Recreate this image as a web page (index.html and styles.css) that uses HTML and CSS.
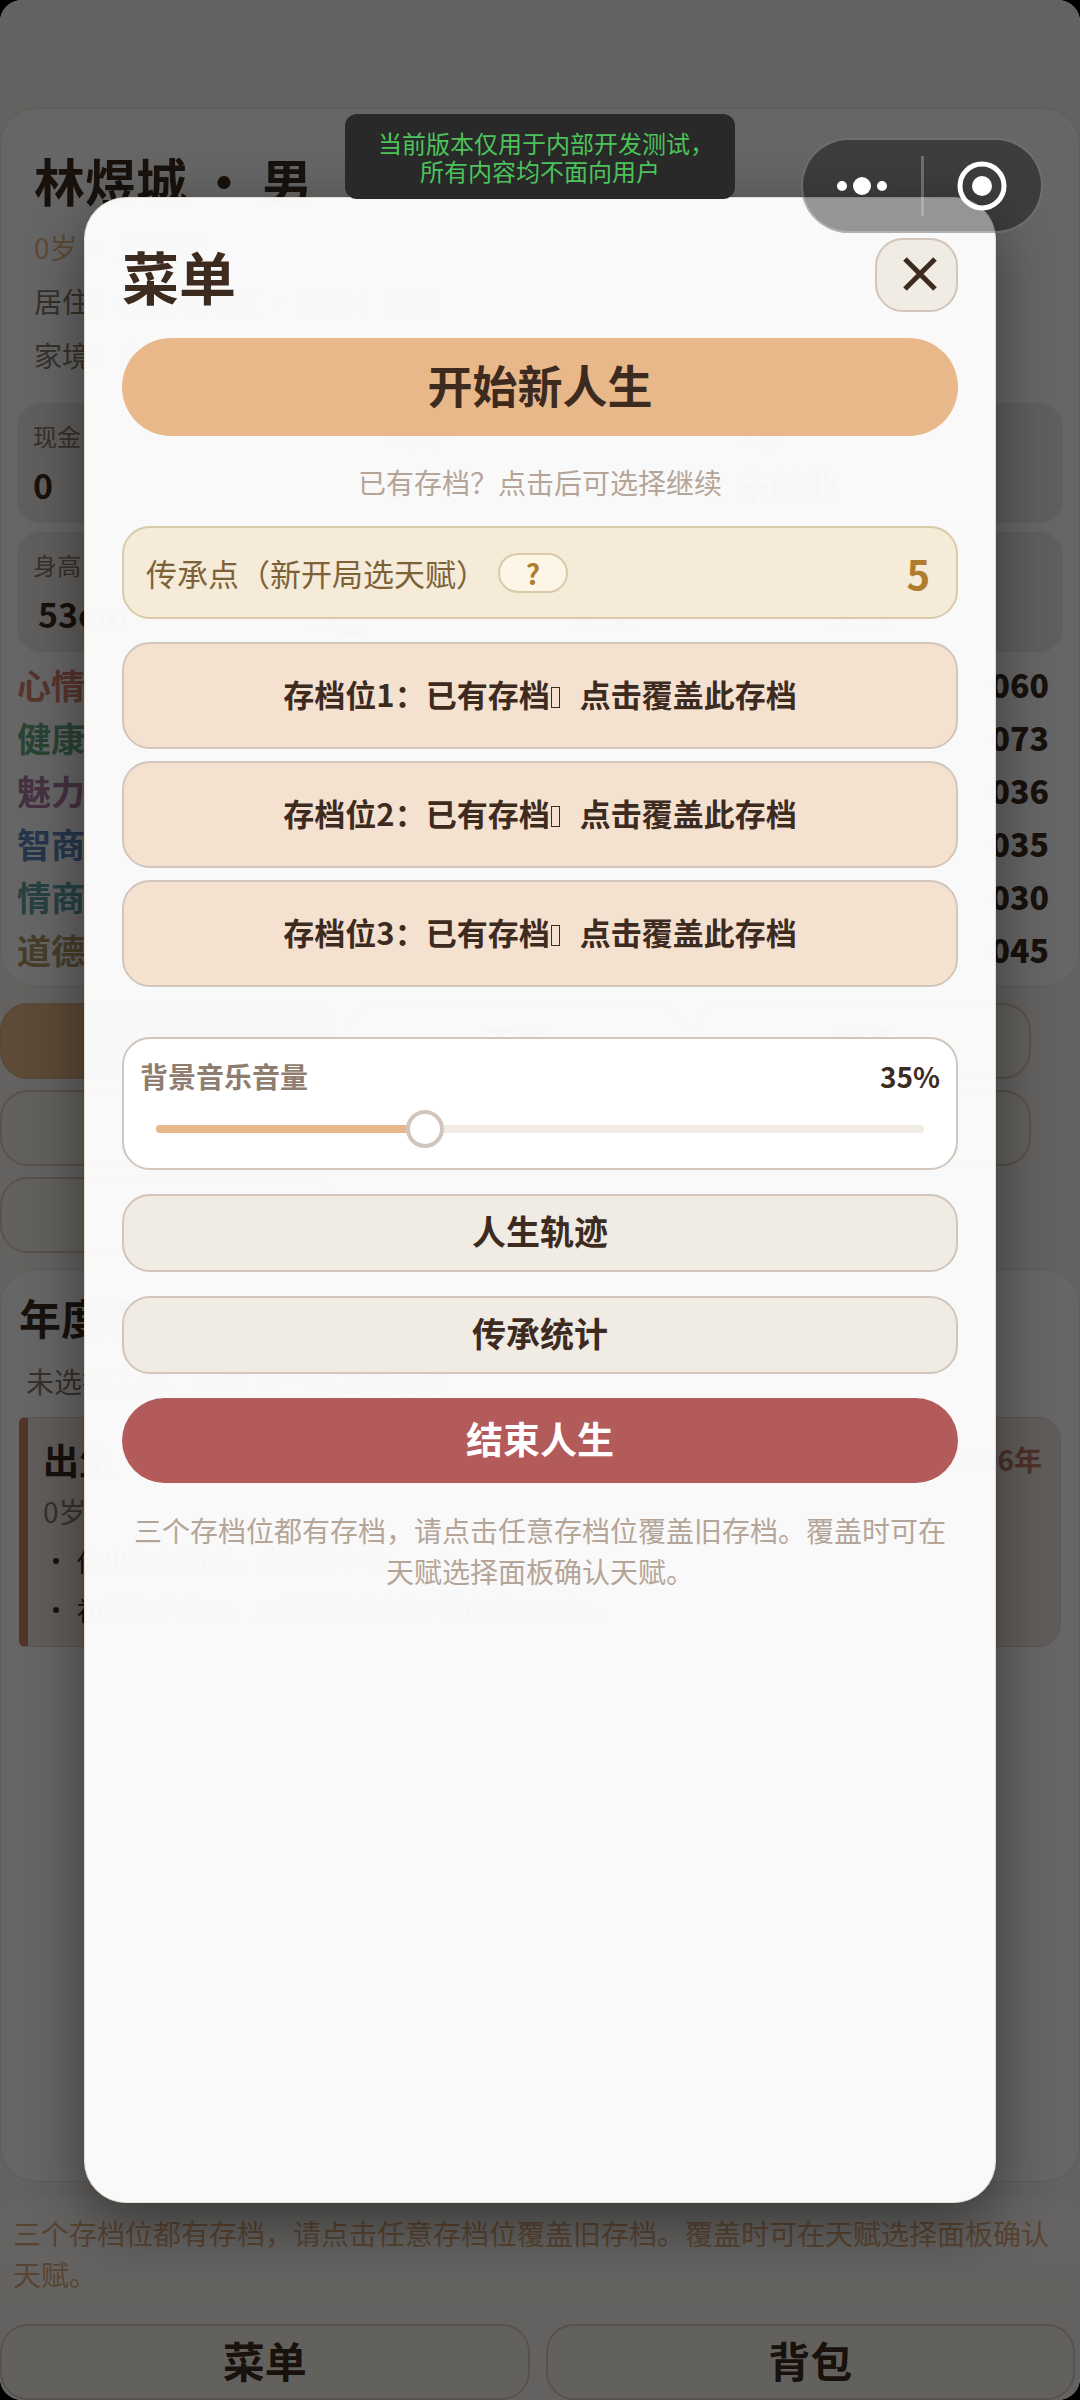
FILE: index.html
```html
<!DOCTYPE html>
<html lang="zh-CN">
<head>
  <meta charset="UTF-8" />
  <meta name="viewport" content="width=device-width, initial-scale=1.0"/>
  <title>菜单</title>
  <link rel="stylesheet" href="styles.css">
</head>
<body>
  <div class="screen">
    <main class="game">
      <section class="card profile">
        <div class="intro">
          <h1>林煜城 ・ 男</h1>
          <p class="age">0岁 · 2006年</p>
          <p>居住：和父母同住 · 生活：普通</p>
          <p>家境：中等</p>
        </div>

        <div class="tiles tiles-3">
          <div class="tile"><span>现金</span><strong>0</strong></div>
          <div class="tile"><span>总资产</span><strong>0</strong></div>
          <div class="tile"><span>工作</span><strong>未就业</strong></div>
        </div>
        <div class="tiles tiles-4">
          <div class="tile"><span>身高</span><strong>53cm</strong></div>
          <div class="tile"><span>体重</span><strong>7kg</strong></div>
          <div class="tile"><span>状态</span><strong>健康</strong></div>
          <div class="tile"><span>婚姻</span><strong>单身</strong></div>
        </div>

        <ul class="attrs">
          <li><span class="mood">心情</span><b>060</b></li>
          <li><span class="health">健康</span><b>073</b></li>
          <li><span class="charm">魅力</span><b>036</b></li>
          <li><span class="iq">智商</span><b>035</b></li>
          <li><span class="eq">情商</span><b>030</b></li>
          <li><span class="moral">道德</span><b>045</b></li>
        </ul>
      </section>

      <div class="actions">
        <button type="button" class="next">下一年</button>
        <button type="button">工作</button>
        <button type="button">财产</button>
        <button type="button">学习</button>
        <button type="button">社交</button>
        <button type="button">商店</button>
        <button type="button">活动</button>
      </div>

      <section class="card yearly">
        <h2>年度事件</h2>
        <p class="desc">未选择工作，可在下一年之前安排</p>
        <article class="event">
          <header><h3>出生</h3><span>2006年</span></header>
          <p>0岁</p>
          <ul>
            <li>你出生在河南，家境是中等。</li>
            <li>初始资产为 0，18岁前的生活开销由父母承担。</li>
          </ul>
        </article>
      </section>

      <p class="notice">三个存档位都有存档，请点击任意存档位覆盖旧存档。覆盖时可在天赋选择面板确认天赋。</p>

      <nav class="tabs">
        <button type="button">菜单</button>
        <button type="button">背包</button>
      </nav>
    </main>

    <div class="overlay">
      <div class="modal" role="dialog" aria-labelledby="menuTitle">
        <header class="modal-head">
          <h2 id="menuTitle">菜单</h2>
          <button type="button" class="close-btn" aria-label="关闭">
            <svg width="34" height="34" viewBox="0 0 34 34"><path d="M2 2L32 32M32 2L2 32" stroke="#3d2b1f" stroke-width="5" fill="none"/></svg>
          </button>
        </header>

        <button type="button" class="start-btn">开始新人生</button>
        <p class="hint start-hint">已有存档？点击后可选择继续</p>

        <div class="legacy">
          <span class="legacy-label">传承点（新开局选天赋）</span>
          <button type="button" class="help-btn">?</button>
          <strong>5</strong>
        </div>

        <div class="slots">
          <button type="button">存档位1：已有存档<i class="mark"></i>点击覆盖此存档</button>
          <button type="button">存档位2：已有存档<i class="mark"></i>点击覆盖此存档</button>
          <button type="button">存档位3：已有存档<i class="mark"></i>点击覆盖此存档</button>
        </div>

        <div class="volume">
          <div class="volume-head">
            <label for="volume">背景音乐音量</label>
            <output for="volume" id="volumeText">35%</output>
          </div>
          <div class="slider" id="slider">
            <input type="range" id="volume" min="0" max="100" value="35" />
          </div>
        </div>

        <button type="button" class="menu-btn">人生轨迹</button>
        <button type="button" class="menu-btn">传承统计</button>
        <button type="button" class="end-btn">结束人生</button>
        <p class="hint">三个存档位都有存档，请点击任意存档位覆盖旧存档。覆盖时可在天赋选择面板确认天赋。</p>
      </div>
    </div>

    <div class="toast">当前版本仅用于内部开发测试，<br>所有内容均不面向用户</div>

    <div class="capsule">
      <button type="button" aria-label="更多">
        <svg width="52" height="20" viewBox="0 0 52 20" fill="#fff"><circle cx="6" cy="10" r="5"/><circle cx="26" cy="10" r="9"/><circle cx="46" cy="10" r="5"/></svg>
      </button>
      <span class="divider"></span>
      <button type="button" aria-label="退出">
        <svg width="50" height="50" viewBox="0 0 50 50"><circle cx="25" cy="25" r="22" fill="none" stroke="#fff" stroke-width="5"/><circle cx="25" cy="25" r="10" fill="#fff"/></svg>
      </button>
    </div>
  </div>

  <script>
    const volume = document.getElementById("volume");

    volume.addEventListener("input", function () {
      document.getElementById("volumeText").textContent = volume.value + "%";
      document.getElementById("slider").style.setProperty("--value", volume.value + "%");
    });
  </script>
</body>
</html>
```

FILE: styles.css
```css
* {
  box-sizing: border-box;
}
html {
  background-color: #000;
}
body {
  margin: 0;
  font-family: "Noto Sans CJK SC", sans-serif;
  font-size: 28px;
  color: #3d2b1f;
}
h1, h2, h3, p, ul {
  margin: 0;
  padding: 0;
}
ul {
  list-style: none;
}
button {
  font-family: inherit;
  font-weight: bold;
  color: inherit;
  padding: 0 0 5px;
  cursor: pointer;
}
.screen {
  position: relative;
  min-height: 100vh;
  border-radius: 22px;
  overflow: hidden;
  background-color: #faf6f0;
}

/* game page */
.game {
  display: flex;
  flex-direction: column;
  gap: 16px;
  min-height: 100vh;
  padding-top: 108px;
}
.card {
  background-color: #fff;
  border: 1px solid #ece4da;
  border-radius: 36px;
  padding: 0 16px;
}
.profile {
  padding-top: 35px;
  padding-bottom: 10px;
}
.intro {
  padding: 0 17px;
  line-height: 54px;
  color: #8a7a6c;
}
.intro h1 {
  font-size: 51px;
  line-height: 72px;
  margin-bottom: 4px;
  color: #3d2b1f;
}
.intro .age {
  color: #e8b88a;
}
.tiles {
  display: grid;
  gap: 9px;
  margin-top: 9px;
}
.tiles-3 {
  grid-template-columns: repeat(3, 1fr);
  margin-top: 21px;
}
.tiles-4 {
  grid-template-columns: repeat(4, 1fr);
}
.tile {
  display: flex;
  flex-direction: column;
  gap: 6px;
  padding: 16px 16px 12px;
  border-radius: 24px;
  background-color: #f3eee8;
}
.tile span {
  font-size: 24px;
  line-height: 34px;
  color: #8a7a6c;
}
.tile strong {
  font-size: 34px;
  line-height: 52px;
}
.tiles-4 strong {
  padding-left: 5px;
}
.attrs {
  margin-top: 6px;
  font-weight: bold;
}
.attrs li {
  display: flex;
  justify-content: space-between;
  padding-right: 14px;
  font-size: 34px;
  line-height: 53px;
}
.attrs b {
  font-size: 32px;
}
.mood { color: #d98572; }
.health { color: #68a884; }
.charm { color: #b07aa6; }
.iq { color: #5e88bc; }
.eq { color: #62a4a8; }
.moral { color: #b39a68; }

.actions {
  display: grid;
  grid-template-columns: repeat(3, 1fr);
  gap: 11px;
  margin-right: 49px;
}
.actions button, .tabs button {
  height: 76px;
  font-size: 32px;
  border: 2px solid #d8cdc0;
  border-radius: 28px;
  background-color: #f7f3ec;
}
.actions .next {
  background-color: #e8b88a;
  border-color: #e0b48a;
}
.yearly {
  flex: 1;
  padding: 17px 18px;
}
.yearly h2 {
  font-size: 42px;
  line-height: 60px;
}
.desc {
  margin: 13px 0 15px 7px;
  line-height: 42px;
  color: #8a7a6c;
}
.event {
  padding: 16px 18px 12px 15px;
  border: 1px solid #e4d8d0;
  border-left: 9px solid #d68468;
  border-radius: 6px 24px 24px 6px;
  background-color: #f3e8e2;
}
.event header {
  display: flex;
  justify-content: space-between;
  line-height: 50px;
}
.event h3 {
  font-size: 36px;
}
.event header span {
  font-weight: bold;
  color: #c27868;
}
.event p {
  margin: 6px 0 4px;
  line-height: 42px;
  color: #8a7a6c;
}
.event li {
  display: flex;
  align-items: center;
  gap: 18px;
  padding-left: 10px;
  font-size: 26px;
  line-height: 49px;
}
.event li::before {
  content: "";
  width: 6px;
  height: 6px;
  border-radius: 50%;
  background-color: #3d2b1f;
}
.notice {
  padding: 15px 13px 13px;
  line-height: 41px;
  border-radius: 24px;
  color: #dcab7e;
  background: linear-gradient(#fdfbf9, #faf6f0);
}
.tabs {
  display: grid;
  grid-template-columns: 1fr 1fr;
  gap: 16px;
  margin-right: 5px;
}
.tabs button {
  font-size: 42px;
}

/* menu */
.overlay {
  position: absolute;
  inset: 0;
  display: flex;
  padding: 197px 84px;
  background-color: rgba(0, 0, 0, 0.6);
}
.modal {
  flex: 1;
  padding: 40px 37px;
  border: 1px solid #e6dccf;
  border-radius: 42px;
  background-color: rgba(252, 252, 252, 0.98);
  box-shadow: 0 20px 60px rgba(0, 0, 0, 0.45);
}
.modal-head {
  display: flex;
  justify-content: space-between;
  align-items: center;
  margin-bottom: 26px;
}
.modal-head h2 {
  font-size: 57px;
  line-height: 74px;
}
.close-btn {
  display: flex;
  align-items: center;
  justify-content: center;
  width: 83px;
  height: 74px;
  padding: 0 0 2px 6px;
  border: 2px solid #d2c6bc;
  border-radius: 28px;
  background-color: #f0ebe3;
}
.start-btn, .end-btn, .menu-btn, .slots button {
  display: block;
  width: 100%;
}
.start-btn {
  height: 98px;
  border: none;
  border-radius: 49px;
  background-color: #e8b88a;
  font-size: 45px;
}
.hint {
  line-height: 41px;
  text-align: center;
  color: #b5a598;
}
.start-hint {
  margin: 26px 0 23px;
}
.legacy {
  display: flex;
  align-items: center;
  height: 93px;
  padding: 0 26px 0 22px;
  border: 2px solid #d9cba8;
  border-radius: 28px;
  background-color: #f5ebd8;
}
.legacy-label {
  font-size: 31px;
  color: #7d6238;
}
.help-btn {
  width: 70px;
  height: 40px;
  margin-left: 11px;
  padding: 0;
  border: 2px solid #d9cba8;
  border-radius: 20px;
  background-color: #fdf6e6;
  font-size: 28px;
  line-height: 36px;
  color: #b07d2e;
}
.legacy strong {
  margin-left: auto;
  font-size: 40px;
  color: #b07d2e;
}
.slots {
  display: grid;
  gap: 12px;
  margin: 23px 0 50px;
}
.slots button {
  height: 107px;
  border: 2px solid #d2c6bc;
  border-radius: 28px;
  background-color: #f5e1cf;
  font-size: 31px;
}
.mark {
  display: inline-block;
  width: 9px;
  height: 21px;
  margin: 0 20px 0 1px;
  border: 1px solid #3d2b1f;
  vertical-align: -1px;
}
.volume {
  padding: 17px 16px 20px;
  margin-bottom: 24px;
  border: 2px solid #d2c6bc;
  border-radius: 28px;
  background-color: #fff;
}
.volume-head {
  display: flex;
  justify-content: space-between;
  margin-bottom: 14px;
  line-height: 40px;
  font-weight: bold;
}
.volume-head label {
  color: #8f7e70;
}
.slider {
  --value: 35%;
  display: grid;
  align-items: center;
  margin: 0 16px;
}
.slider::before {
  content: "";
  grid-area: 1 / 1;
  height: 8px;
  border-radius: 4px;
  background: linear-gradient(to right, #e8b88a var(--value), #f0ebe3 var(--value));
}
/* the input is one thumb wider than the track */
.slider input {
  grid-area: 1 / 1;
  width: calc(100% + 38px);
  height: 38px;
  margin: 0 -19px;
  background: none;
  -webkit-appearance: none;
  appearance: none;
}
.slider input::-webkit-slider-thumb {
  -webkit-appearance: none;
  width: 38px;
  height: 38px;
  border: 4px solid #d2c6bc;
  border-radius: 50%;
  background-color: #fff;
}
.menu-btn {
  height: 78px;
  margin-bottom: 24px;
  border: 2px solid #d2c6bc;
  border-radius: 28px;
  background-color: #f0ebe3;
  font-size: 34px;
}
.end-btn {
  height: 85px;
  margin-bottom: 27px;
  border: none;
  border-radius: 43px;
  background-color: #b35a5a;
  font-size: 37px;
  color: #fff;
}

/* on top of everything */
.toast {
  position: absolute;
  top: 114px;
  left: 50%;
  transform: translateX(-50%);
  width: 390px;
  padding: 15px 0 14px;
  border-radius: 12px;
  background-color: #292929;
  font-size: 24px;
  line-height: 28px;
  font-feature-settings: "halt";
  text-align: center;
  color: #4cc35a;
}
.capsule {
  position: absolute;
  top: 138px;
  right: 37px;
  display: flex;
  align-items: center;
  width: 242px;
  height: 95px;
  border: 2px solid rgba(255, 255, 255, 0.25);
  border-radius: 48px;
  background-color: rgba(0, 0, 0, 0.4);
}
.capsule button {
  flex: 1;
  display: flex;
  justify-content: center;
  padding: 0;
  border: none;
  background: none;
}
.divider {
  width: 3px;
  height: 60px;
  background-color: rgba(255, 255, 255, 0.25);
}
```
